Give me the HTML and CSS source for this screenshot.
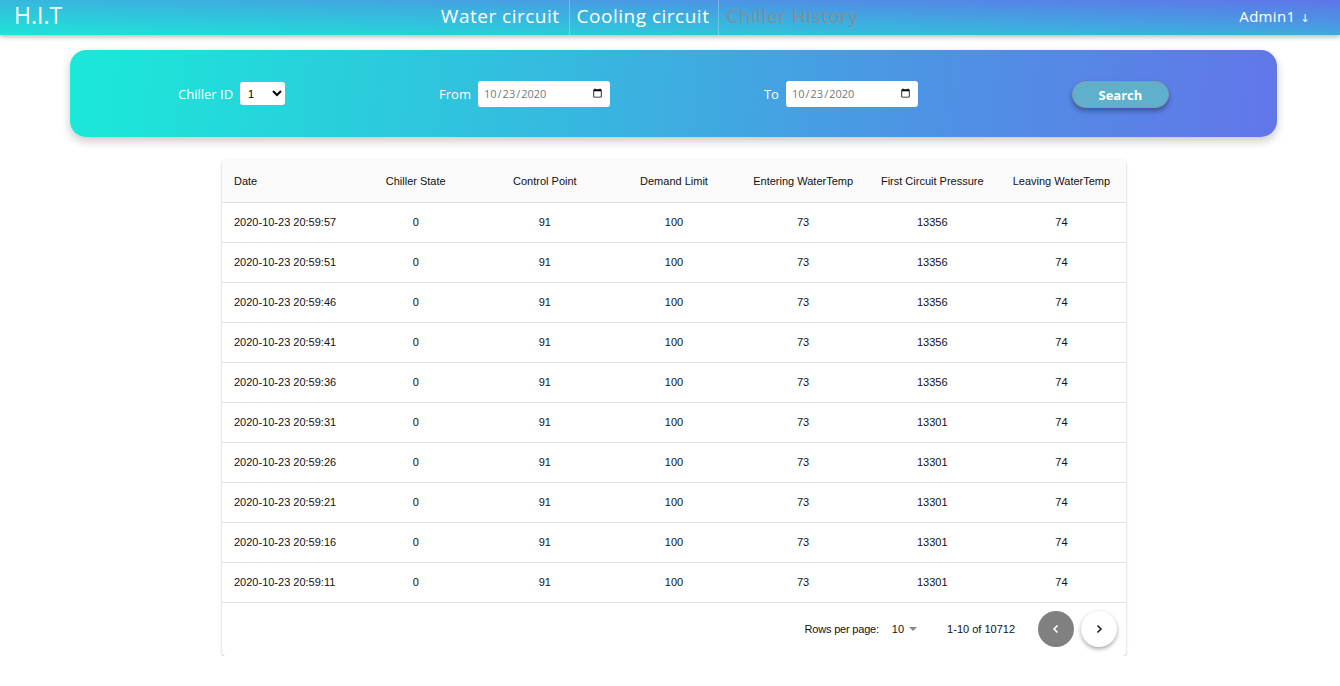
FILE: index.html
```html
<!DOCTYPE html>
<html>
<head>
<meta charset="utf-8">
<link rel="stylesheet" href="styles.css">
</head>
<body>
<header class="topbar">
  <div class="logo">H.I.T</div>
  <nav class="nav">
    <a class="nav-link">Water circuit</a>
    <a class="nav-link sep">Cooling circuit</a>
    <a class="nav-link sep active">Chiller History</a>
  </nav>
  <div class="user">Admin1 <span class="user-arrow">↓</span></div>
</header>

<section class="filter">
  <div class="field">
    <label class="field-label">Chiller ID</label>
    <select class="chiller-select"><option>1</option></select>
  </div>
  <div class="field">
    <label class="field-label">From</label>
    <input class="date-input" type="date" value="2020-10-23">
  </div>
  <div class="field">
    <label class="field-label">To</label>
    <input class="date-input" type="date" value="2020-10-23">
  </div>
  <button class="search-btn">Search</button>
</section>

<section class="table-card">
  <table class="data-table">
    <thead>
      <tr>
        <th class="col-date">Date</th>
        <th>Chiller State</th>
        <th>Control Point</th>
        <th>Demand Limit</th>
        <th>Entering WaterTemp</th>
        <th>First Circuit Pressure</th>
        <th>Leaving WaterTemp</th>
      </tr>
    </thead>
    <tbody>
      <tr><td class="col-date">2020-10-23 20:59:57</td><td>0</td><td>91</td><td>100</td><td>73</td><td>13356</td><td>74</td></tr>
      <tr><td class="col-date">2020-10-23 20:59:51</td><td>0</td><td>91</td><td>100</td><td>73</td><td>13356</td><td>74</td></tr>
      <tr><td class="col-date">2020-10-23 20:59:46</td><td>0</td><td>91</td><td>100</td><td>73</td><td>13356</td><td>74</td></tr>
      <tr><td class="col-date">2020-10-23 20:59:41</td><td>0</td><td>91</td><td>100</td><td>73</td><td>13356</td><td>74</td></tr>
      <tr><td class="col-date">2020-10-23 20:59:36</td><td>0</td><td>91</td><td>100</td><td>73</td><td>13356</td><td>74</td></tr>
      <tr><td class="col-date">2020-10-23 20:59:31</td><td>0</td><td>91</td><td>100</td><td>73</td><td>13301</td><td>74</td></tr>
      <tr><td class="col-date">2020-10-23 20:59:26</td><td>0</td><td>91</td><td>100</td><td>73</td><td>13301</td><td>74</td></tr>
      <tr><td class="col-date">2020-10-23 20:59:21</td><td>0</td><td>91</td><td>100</td><td>73</td><td>13301</td><td>74</td></tr>
      <tr><td class="col-date">2020-10-23 20:59:16</td><td>0</td><td>91</td><td>100</td><td>73</td><td>13301</td><td>74</td></tr>
      <tr><td class="col-date">2020-10-23 20:59:11</td><td>0</td><td>91</td><td>100</td><td>73</td><td>13301</td><td>74</td></tr>
    </tbody>
  </table>
  <div class="pager">
    <span class="rows-label">Rows per page:</span>
    <span class="rows-select">10
      <svg class="caret" width="8" height="4" viewBox="0 0 8 4"><path d="M0 0 L8 0 L4 4 Z" fill="#888"/></svg>
    </span>
    <span class="range">1-10 of 10712</span>
    <button class="page-btn prev">
      <svg width="12" height="12" viewBox="0 0 12 12"><path d="M7.5 2.5 L4 6 L7.5 9.5" fill="none" stroke="#fff" stroke-width="1.6"/></svg>
    </button>
    <button class="page-btn next">
      <svg width="12" height="12" viewBox="0 0 12 12"><path d="M4.5 2.5 L8 6 L4.5 9.5" fill="none" stroke="#222" stroke-width="1.6"/></svg>
    </button>
  </div>
</section>
</body>
</html>
```

FILE: styles.css
```css
* { box-sizing: border-box; }
html, body { margin: 0; padding: 0; background: #fff; }
body { font-family: "Liberation Sans", Arial, sans-serif; color: #111; }

.topbar {
  height: 35px;
  display: flex;
  align-items: center;
  padding: 0 30px 4px 14px;
  background: linear-gradient(2deg, #1de4d8 0%, #3cb0df 50%, #5f74e9 100%);
  box-shadow: 0 2px 5px rgba(0,0,0,0.28);
  font-family: "Open Sans", "DejaVu Sans", sans-serif;
  color: #fff;
}
.logo { font-size: 23px; letter-spacing: 0; line-height: 31px; }
.nav { display: flex; height: 35px; margin: 0 auto -4px auto; }
.nav-link {
  display: flex; align-items: center;
  padding: 0 9px 4px 7px;
  font-size: 19px;
  letter-spacing: 0.5px;
  color: #fff;
  white-space: nowrap;
}
.nav-link.sep { border-left: 1px solid rgba(255,255,255,0.25); }
.nav-link.active { color: #7f8f98; }
.user { font-size: 15px; white-space: nowrap; letter-spacing: 0.3px; }
.user-arrow { font-size: 11px; margin-left: 1px; }

.filter {
  margin: 15px 63px 0 70px;
  height: 87px;
  border-radius: 16px;
  background: linear-gradient(96deg, #1ae9d8 0%, #35badf 40%, #4d94e4 70%, #6276e9 100%);
  box-shadow: 0 4px 10px rgba(0,0,0,0.22);
  display: flex;
  align-items: center;
  padding-left: 108px;
  gap: 154px;
  font-family: "Open Sans", "DejaVu Sans", sans-serif;
}
.field { display: flex; align-items: center; gap: 7px; }
.field-label { color: #fff; font-size: 13px; }
.chiller-select {
  width: 45px; height: 23px;
  border: none; border-radius: 3px;
  background: #fff;
  font-size: 11px;
  padding: 0 4px;
  font-family: "Liberation Sans", sans-serif;
}
.date-input {
  width: 132px; height: 26px;
  border: none; border-radius: 3px;
  background: #fff;
  font-family: "Open Sans", sans-serif;
  font-size: 11px;
  color: #777;
  padding: 0 5px;
}
.search-btn {
  width: 97px; height: 27px;
  border-radius: 14px;
  border: 1px solid #8a9aa8;
  background: #5eb0cd;
  color: #fff;
  font-family: "Open Sans", "DejaVu Sans", sans-serif;
  font-weight: 700;
  font-size: 13px;
  box-shadow: 0 3px 5px rgba(0,0,0,0.35);
  margin-top: 2px;
}

.table-card {
  width: 904px;
  margin: 23px 0 0 222px;
  background: #fff;
  border-radius: 4px;
  box-shadow: 0 1px 3px rgba(0,0,0,0.22), 0 1px 1px rgba(0,0,0,0.1);
  overflow: hidden;
}
.data-table { width: 100%; border-collapse: collapse; table-layout: fixed; font-size: 11px; }
.data-table th, .data-table td {
  text-align: center;
  border-bottom: 1px solid #e0e0e0;
  font-weight: 400;
  padding: 0 4px;
  color: #111;
}
.data-table th { height: 42px; background: #fafafa; }
.data-table td { height: 40px; }
.data-table .col-date { text-align: left; padding-left: 12px; }

.pager {
  height: 53px;
  display: flex;
  align-items: center;
  justify-content: flex-end;
  padding-right: 9px;
  font-size: 11px;
  color: #111;
}
.rows-label { letter-spacing: -0.2px; }
.rows-select { margin-left: 13px; display: flex; align-items: center; gap: 5px; }
.caret { margin-top: -1px; }
.range { margin-left: 30px; }
.page-btn {
  width: 36px; height: 36px;
  border-radius: 50%;
  border: none;
  display: flex; align-items: center; justify-content: center;
  padding: 0;
}
.page-btn.prev { background: #808080; margin-left: 23px; }
.page-btn.next { background: #fff; margin-left: 7px; box-shadow: 0 2px 4px rgba(0,0,0,0.35); }
```
